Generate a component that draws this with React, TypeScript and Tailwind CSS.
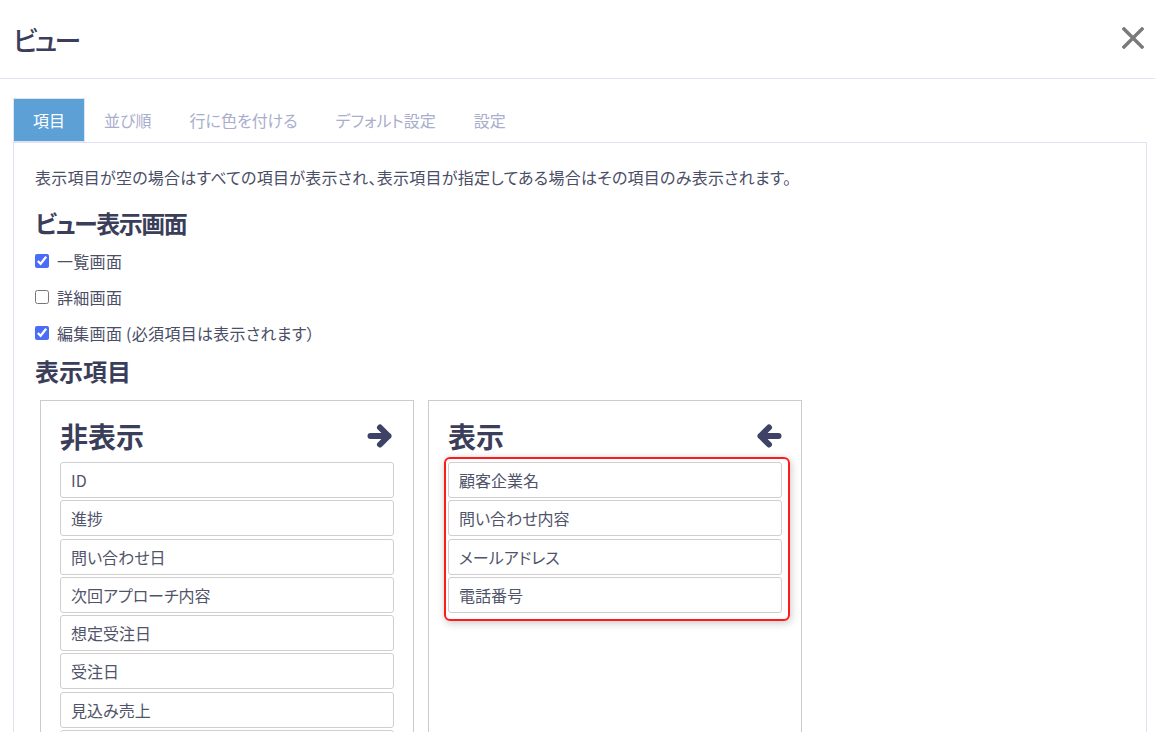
const hidden = ['ID', '進捗', '問い合わせ日', '次回アプローチ内容', '想定受注日', '受注日', '見込み売上', ''];
const shown = ['顧客企業名', '問い合わせ内容', 'メールアドレス', '電話番号'];
const tabs = ['項目', '並び順', '行に色を付ける', 'デフォルト設定', '設定'];

function Item({ label }: { label: string }) {
  return (
    <div className="h-[36px] shrink-0 flex items-center px-[10px] border border-[#cfcfcf] rounded-[3px] bg-white text-[16px] text-[#50546a]">
      {label}
    </div>
  );
}

function Arrow({ left }: { left?: boolean }) {
  return (
    <svg width="27" height="26" viewBox="0 0 27 26" className={left ? 'rotate-180' : ''}>
      <path
        d="M3.5 13 H21.5 M13 4.5 L21.5 13 L13 21.5"
        fill="none"
        stroke="#3d4266"
        strokeWidth="6"
        strokeLinecap="round"
        strokeLinejoin="round"
      />
    </svg>
  );
}

export default function App() {
  return (
    <div className="w-[1155px] h-[732px] overflow-hidden bg-white font-['Noto_Sans_CJK_JP','Noto_Sans',sans-serif] [font-feature-settings:'palt'] text-[#4a4e66]">
      {/* header */}
      <div className="h-[79px] flex items-center justify-between pl-[13px] pr-[11px] border-b border-[#e3e1ef]">
        <h1 className="text-[27px] leading-none font-medium tracking-[-3px] text-[#3a3e5a]">ビュー</h1>
        <svg width="22" height="22" viewBox="0 0 22 22" className="mt-[-2px]">
          <path d="M2 2 L20 20 M20 2 L2 20" stroke="#7a7a7a" strokeWidth="3.4" strokeLinecap="square" />
        </svg>
      </div>

      {/* tabs */}
      <div className="mt-[19px] ml-[13px] flex h-[44px]">
        {tabs.map((t, i) => (
          <div
            key={t}
            className={
              i === 0
                ? 'px-[19px] flex items-center bg-[#5ca0d6] text-white text-[16px] border border-[#dde3f0]'
                : 'px-[19px] flex items-center text-[#a8aecb] text-[16px]'
            }
          >
            {t}
          </div>
        ))}
      </div>

      {/* panel */}
      <div className="ml-[13px] mr-[8px] border-l border-r border-t border-[#e3e1ef] px-[21px] pt-[23px] h-[600px]">
        <p className="text-[16px] leading-[22px] tracking-[0.25px]">
          表示項目が空の場合はすべての項目が表示され、表示項目が指定してある場合はその項目のみ表示されます。
        </p>
        <h2 className="mt-[19px] text-[24px] leading-[32px] font-semibold tracking-[-1.5px] text-[#3a3e5a]">ビュー表示画面</h2>
        <div className="mt-[4px] text-[16px] tracking-[0.3px]">
          <label className="flex items-center gap-[8px] h-[36px]">
            <input type="checkbox" defaultChecked className="w-[14px] h-[14px] accent-[#4a6cf7]" />
            一覧画面
          </label>
          <label className="flex items-center gap-[8px] h-[36px]">
            <input type="checkbox" className="w-[14px] h-[14px] accent-[#4a6cf7]" />
            詳細画面
          </label>
          <label className="flex items-center gap-[8px] h-[36px]">
            <input type="checkbox" defaultChecked className="w-[14px] h-[14px] accent-[#4a6cf7]" />
            編集画面 (必須項目は表示されます）
          </label>
        </div>
        <h2 className="mt-[4px] text-[24px] leading-[32px] font-semibold text-[#3a3e5a]">表示項目</h2>

        <div className="mt-[13px] ml-[5px] flex gap-[14px]">
          <div className="w-[374px] h-[400px] border border-[#cccccc] px-[19px] pt-[17px]">
            <div className="flex items-center justify-between h-[36px] mb-[8px]">
              <span className="text-[28px] font-bold text-[#3a3e5a] leading-none">非表示</span>
              <Arrow />
            </div>
            <div className="flex flex-col gap-[2.3px]">
              {hidden.map((h, i) => (
                <Item key={i} label={h} />
              ))}
            </div>
          </div>

          <div className="w-[374px] h-[400px] border border-[#cccccc] px-[19px] pt-[17px]">
            <div className="flex items-center justify-between h-[36px] mb-[8px]">
              <span className="text-[28px] font-bold text-[#3a3e5a] leading-none">表示</span>
              <Arrow left />
            </div>
            <div className="relative">
              <div className="absolute -left-[4px] -right-[8px] -top-[5px] -bottom-[8px] border-2 border-[#ff1a1a] rounded-[6px] shadow-[1px_2px_8px_rgba(0,0,0,0.22)]" />
              <div className="flex flex-col gap-[2.3px]">
                {shown.map((s) => (
                  <Item key={s} label={s} />
                ))}
              </div>
            </div>
          </div>
        </div>
      </div>
    </div>
  );
}
